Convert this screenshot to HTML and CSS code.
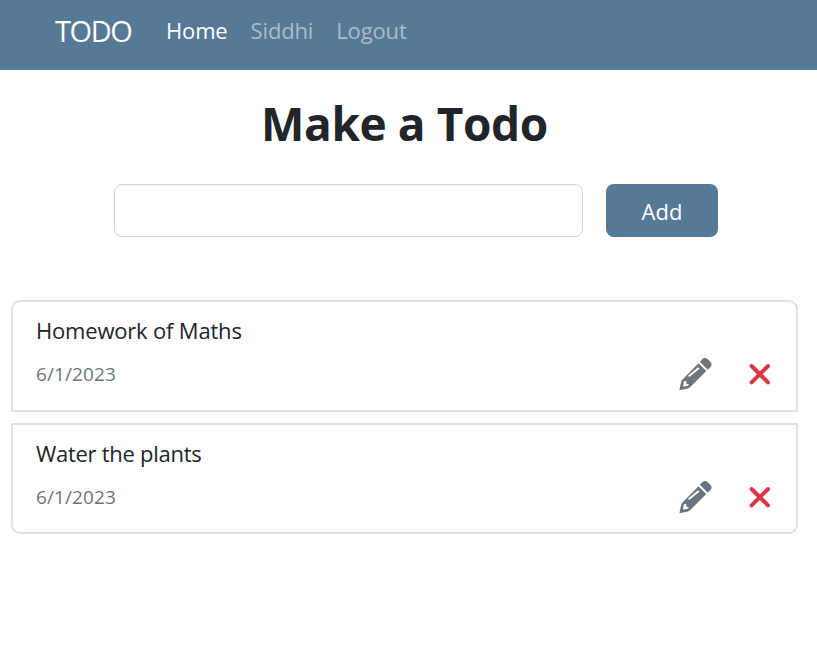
FILE: index.html
```html
<!DOCTYPE html>
<html lang="en">
<head>
<meta charset="utf-8">
<title>TODO</title>
<link rel="stylesheet" href="styles.css">
</head>
<body>
<nav class="navbar">
  <a class="brand">TODO</a>
  <a class="link active">Home</a>
  <a class="link">Siddhi</a>
  <a class="link">Logout</a>
</nav>
<main>
  <h1 class="title">Make a Todo</h1>
  <form class="form">
    <input class="field" type="text" aria-label="Todo">
    <button class="add" type="button">Add</button>
  </form>
  <ul class="list">
    <li class="item">
      <p class="name name-homework">Homework of Maths</p>
      <div class="row">
        <span class="date">6/1/2023</span>
        <svg class="pencil" viewBox="0 0 33 33"><path fill-rule="evenodd" d="M20.800 3.800 23.500 1.100Q26-1 28.500 1.100L31.500 4Q33.700 6.500 31.500 9L28.700 11.700ZM19.500 5.200 27.300 13 11.500 28.800Q10.300 29.900 8.800 30.400L.4 32.300 2.100 24Q2.600 22.500 3.800 21.300ZM9 17.800 10.300 19.100 20.500 10.800 19 9.300ZM4.800 23.600 4 27.800 5 28.800 9.300 27.600 9.800 25.900H7.500L7.200 22.800Z"/></svg>
        <svg class="cross" viewBox="0 0 22 22"><path d="M2.600 3 19 19.400M19 3 2.600 19.400"/></svg>
      </div>
    </li>
    <li class="item">
      <p class="name name-plants">Water the plants</p>
      <div class="row">
        <span class="date">6/1/2023</span>
        <svg class="pencil" viewBox="0 0 33 33"><path fill-rule="evenodd" d="M20.800 3.800 23.500 1.100Q26-1 28.500 1.100L31.500 4Q33.700 6.500 31.500 9L28.700 11.700ZM19.500 5.200 27.300 13 11.500 28.800Q10.300 29.900 8.800 30.400L.4 32.300 2.100 24Q2.600 22.500 3.800 21.300ZM9 17.800 10.300 19.100 20.500 10.800 19 9.300ZM4.800 23.600 4 27.800 5 28.800 9.300 27.600 9.800 25.900H7.500L7.200 22.800Z"/></svg>
        <svg class="cross" viewBox="0 0 22 22"><path d="M2.600 3 19 19.400M19 3 2.600 19.400"/></svg>
      </div>
    </li>
  </ul>
</main>
</body>
</html>
```
FILE: styles.css
```css
* { box-sizing: border-box; }
body {
  margin: 0;
  background: #fff;
  color: #212529;
  font-family: "Segoe UI", "Open Sans", "Noto Sans", sans-serif;
}
.navbar {
  display: flex;
  height: 70px;
  padding: 0 55px 9px;
  align-items: center;
  background: #567996;
  color: #fff;
}
.brand { width: 111px; font-size: 29px; letter-spacing: -1.4px; }
.link { margin-right: 23px; padding-bottom: 2px; font-size: 22px; letter-spacing: -0.15px; color: #aabccb; }
.active { color: #fff; }
.title {
  margin: 21px 0 0;
  padding-right: 8px;
  text-align: center;
  font-size: 46px;
  letter-spacing: -0.4px;
  line-height: 64px;
  font-weight: 700;
}
.form { display: flex; gap: 23px; margin: 29px 0 0 114px; }
.field {
  width: 469px;
  height: 53px;
  border: 1px solid #ced4da;
  border-radius: 8px;
  background: #fff;
}
.add {
  width: 112px;
  height: 53px;
  padding: 1px 0 0;
  border: 0;
  border-radius: 8px;
  background: #567996;
  color: #fff;
  font: 22px "Segoe UI", "Open Sans", "Noto Sans", sans-serif;
}
.list {
  display: grid;
  gap: 11px;
  width: 787px;
  margin: 63px 0 0 11px;
  padding: 0;
  list-style: none;
}
.item {
  height: 112px;
  padding: 11px 25px 0 23px;
  border: 2px solid #dee2e6;
}
.item:first-child { border-radius: 9px 9px 0 0; }
.item:last-child { height: 111px; border-radius: 0 0 9px 9px; }
.name { margin: 0; font-size: 22px; line-height: 34px; }
.name-homework { letter-spacing: -0.19px; }
.name-plants { letter-spacing: -0.28px; }
.row { display: flex; align-items: center; height: 50px; margin-top: 2px; }
.date { flex: 1; font-size: 19px; letter-spacing: 0.1px; color: #6c757d; }
.pencil { width: 33px; height: 33px; margin-right: 37px; fill: #6c757d; }
.cross { width: 22px; height: 22px; fill: none; stroke: #dc3545; stroke-width: 4; stroke-linecap: round; }
```
